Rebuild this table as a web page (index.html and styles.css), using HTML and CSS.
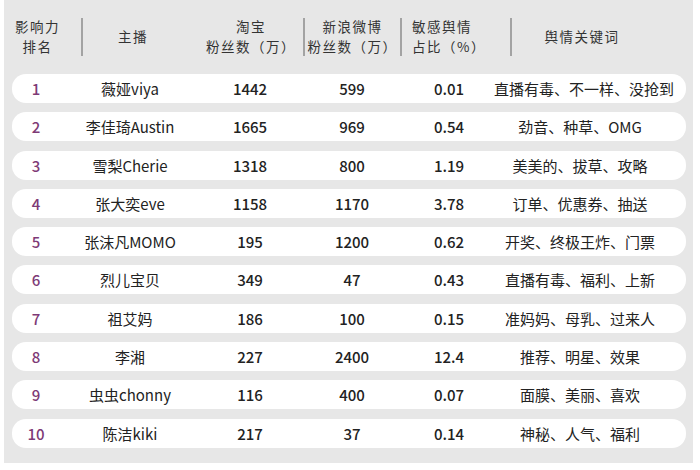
FILE: index.html
```html
<!DOCTYPE html>
<html lang="zh">
<head>
<meta charset="utf-8">
<link rel="stylesheet" href="styles.css">
</head>
<body>
<div class="panel">
  <div class="head">
    <div class="h h-rank"><span>影响力<br>排名</span></div>
    <div class="sep"></div>
    <div class="h h-name"><span>主播</span></div>
    <div class="h h-tb"><span>淘宝<br>粉丝数（万）</span></div>
    <div class="sep"></div>
    <div class="h h-wb"><span>新浪微博<br>粉丝数（万）</span></div>
    <div class="sep"></div>
    <div class="h h-sens"><span class="left">敏感舆情<br>占比（%）</span></div>
    <div class="sep"></div>
    <div class="h h-kw"><span>舆情关键词</span></div>
  </div>
  <div class="rows">
    <div class="row"><span class="rank">1</span><span>薇娅viya</span><span class="num">1442</span><span class="num">599</span><span class="num">0.01</span><span>直播有毒、不一样、没抢到</span></div>
    <div class="row"><span class="rank">2</span><span>李佳琦Austin</span><span class="num">1665</span><span class="num">969</span><span class="num">0.54</span><span>劲音、种草、OMG</span></div>
    <div class="row"><span class="rank">3</span><span>雪梨Cherie</span><span class="num">1318</span><span class="num">800</span><span class="num">1.19</span><span>美美的、拔草、攻略</span></div>
    <div class="row"><span class="rank">4</span><span>张大奕eve</span><span class="num">1158</span><span class="num">1170</span><span class="num">3.78</span><span>订单、优惠券、抽送</span></div>
    <div class="row"><span class="rank">5</span><span>张沫凡MOMO</span><span class="num">195</span><span class="num">1200</span><span class="num">0.62</span><span>开奖、终极王炸、门票</span></div>
    <div class="row"><span class="rank">6</span><span>烈儿宝贝</span><span class="num">349</span><span class="num">47</span><span class="num">0.43</span><span>直播有毒、福利、上新</span></div>
    <div class="row"><span class="rank">7</span><span>祖艾妈</span><span class="num">186</span><span class="num">100</span><span class="num">0.15</span><span>准妈妈、母乳、过来人</span></div>
    <div class="row"><span class="rank">8</span><span>李湘</span><span class="num">227</span><span class="num">2400</span><span class="num">12.4</span><span>推荐、明星、效果</span></div>
    <div class="row"><span class="rank">9</span><span>虫虫chonny</span><span class="num">116</span><span class="num">400</span><span class="num">0.07</span><span>面膜、美丽、喜欢</span></div>
    <div class="row"><span class="rank">10</span><span>陈洁kiki</span><span class="num">217</span><span class="num">37</span><span class="num">0.14</span><span>神秘、人气、福利</span></div>
  </div>
</div>
</body>
</html>
```

FILE: styles.css
```css
* { box-sizing: border-box; }
html, body {
  margin: 0;
  padding: 0;
  background: #ffffff;
}
body {
  font-family: "Noto Sans CJK SC", "Noto Sans", sans-serif;
  color: #222;
}
.panel {
  margin-left: 4px;
  width: 689px;
  height: 463px;
  background: #e7e7e7;
  padding: 16px 0 0 8px;
}
.head {
  display: flex;
  align-items: center;
  width: 674px;
  height: 42px;
  margin-bottom: 16px;
  font-size: 13.5px;
  line-height: 19.6px;
  color: #333;
  letter-spacing: 1.5px;
}
.h {
  display: flex;
  justify-content: center;
  align-items: center;
  text-align: center;
  white-space: nowrap;
}
.h .left { text-align: left; }
.sep {
  width: 2px;
  height: 38px;
  background: #a3a3a3;
  flex: none;
}
.h-rank { width: 69px; padding-right: 18px; }
.h-name { width: 116px; padding-right: 16px; }
.h-tb { width: 104px; }
.h-wb { width: 95px; }
.h-sens { width: 108px; padding-right: 14px; }
.h-kw { flex: 1; padding-right: 34px; }
.rows {
  display: flex;
  flex-direction: column;
  gap: 9.3px;
  width: 674px;
}
.row {
  display: grid;
  grid-template-columns: 48px 140px 100px 104px 90px 172px 1fr;
  align-items: center;
  height: 29px;
  background: #ffffff;
  border-radius: 14px;
  font-size: 15px;
  white-space: nowrap;
}
.row span {
  text-align: center;
}
.row .rank {
  color: #7e3a76;
  font-weight: 500;
}
.row .num {
  font-weight: 500;
}
```
